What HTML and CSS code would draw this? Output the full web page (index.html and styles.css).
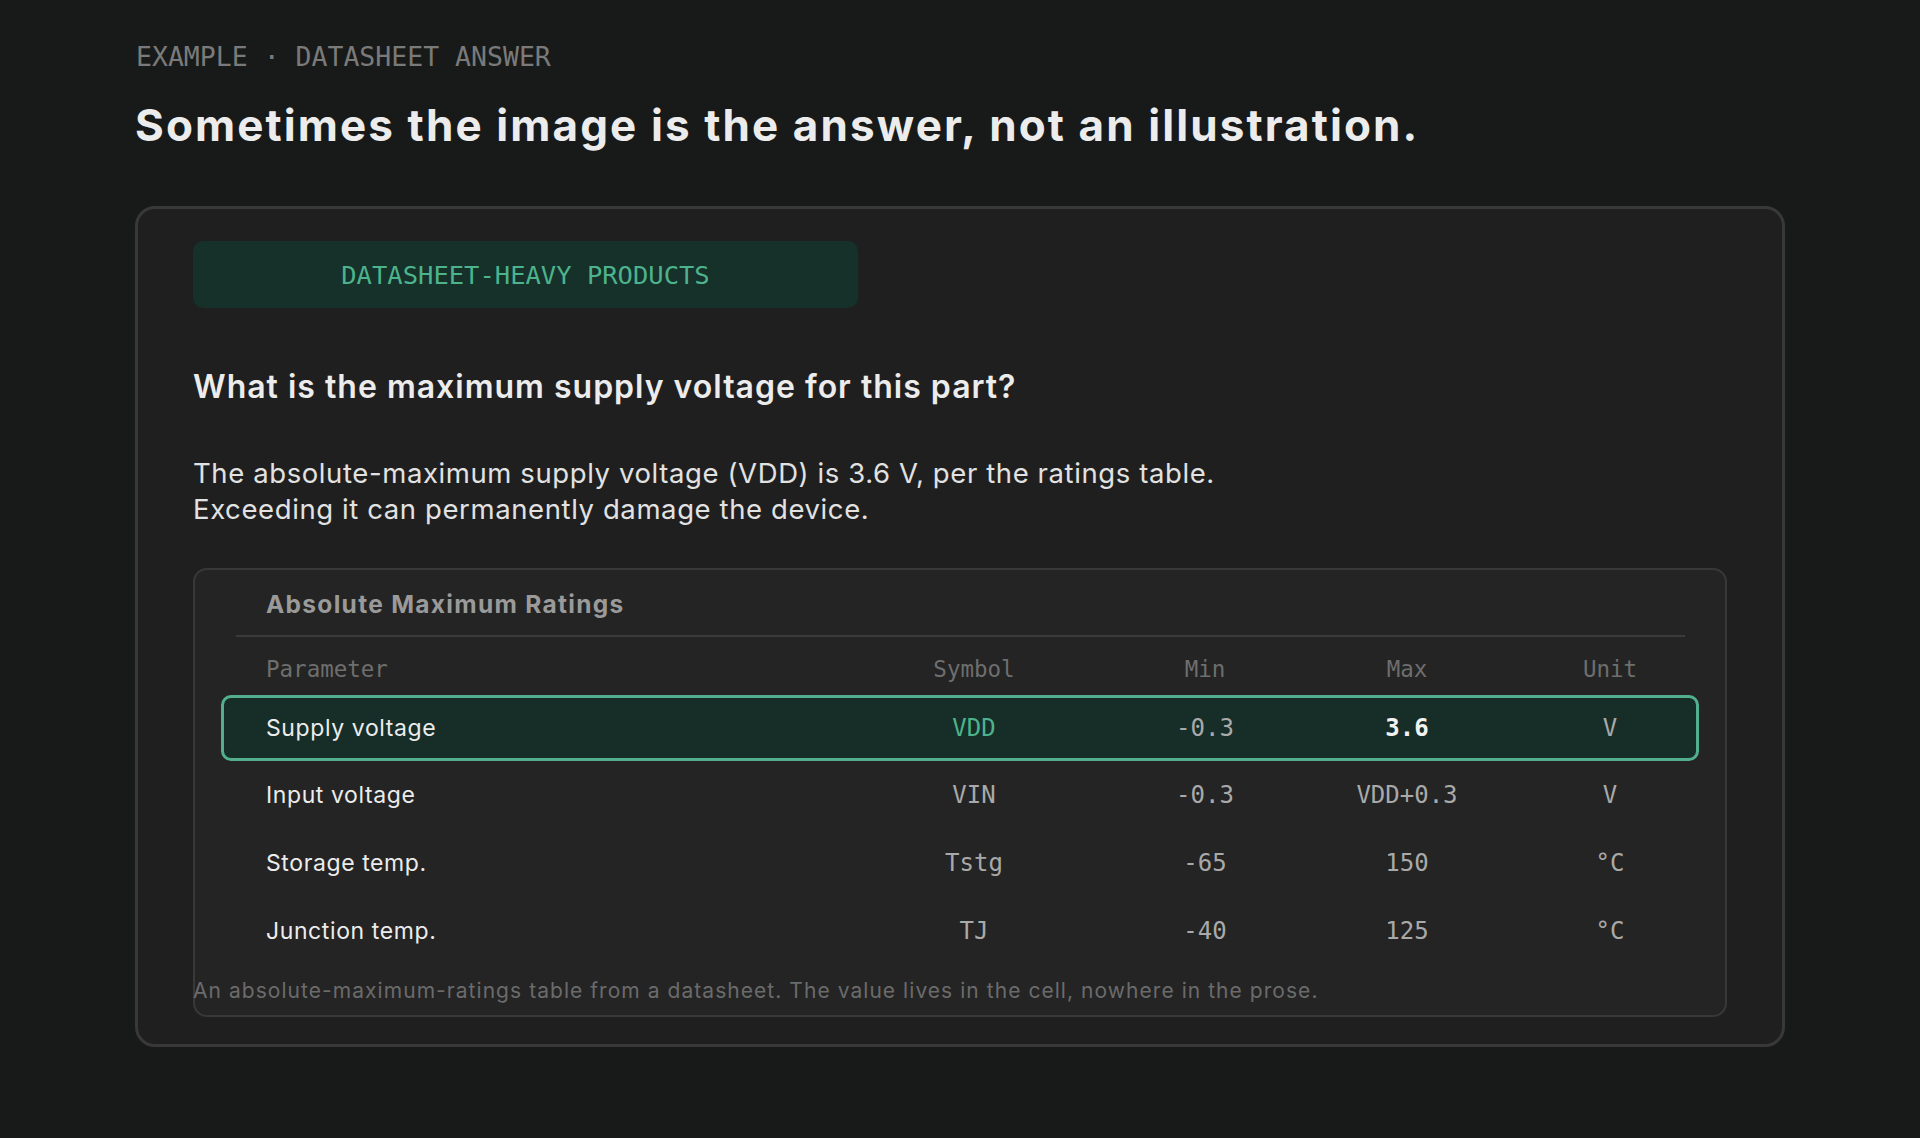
FILE: index.html
```html
<!DOCTYPE html>
<html lang="en">
<head>
<meta charset="utf-8">
<title>Datasheet answer</title>
<link rel="stylesheet" href="styles.css">
</head>
<body>
<main class="page">
  <div class="eyebrow">EXAMPLE · DATASHEET ANSWER</div>
  <h1 class="headline">Sometimes the image is the answer, not an illustration.</h1>
  <section class="card">
    <div class="tag">DATASHEET-HEAVY PRODUCTS</div>
    <h2 class="question">What is the maximum supply voltage for this part?</h2>
    <p class="answer">The absolute-maximum supply voltage (VDD) is 3.6 V, per the ratings table.<br>Exceeding it can permanently damage the device.</p>
    <figure class="figure">
      <div class="sheet">
        <div class="sheet-title">Absolute Maximum Ratings</div>
        <div class="rule"></div>
        <div class="row head">
          <span class="c-param">Parameter</span>
          <span class="c">Symbol</span>
          <span class="c">Min</span>
          <span class="c">Max</span>
          <span class="c">Unit</span>
        </div>
        <div class="row hl">
          <span class="c-param">Supply voltage</span>
          <span class="c sym-hl">VDD</span>
          <span class="c">-0.3</span>
          <span class="c max-hl">3.6</span>
          <span class="c">V</span>
        </div>
        <div class="row">
          <span class="c-param">Input voltage</span>
          <span class="c">VIN</span>
          <span class="c">-0.3</span>
          <span class="c">VDD+0.3</span>
          <span class="c">V</span>
        </div>
        <div class="row">
          <span class="c-param">Storage temp.</span>
          <span class="c">Tstg</span>
          <span class="c">-65</span>
          <span class="c">150</span>
          <span class="c">°C</span>
        </div>
        <div class="row">
          <span class="c-param">Junction temp.</span>
          <span class="c">TJ</span>
          <span class="c">-40</span>
          <span class="c">125</span>
          <span class="c">°C</span>
        </div>
      </div>
      <figcaption class="caption">An absolute-maximum-ratings table from a datasheet. The value lives in the cell, nowhere in the prose.</figcaption>
    </figure>
  </section>
</main>
</body>
</html>
```

FILE: styles.css
```css
* { box-sizing: border-box; }
html, body { margin: 0; padding: 0; }
body {
  background: #181a19;
  color: #e8e8e8;
  font-family: "Inter", "Liberation Sans", sans-serif;
}
.page {
  width: 1650px;
  margin: 0 auto;
  padding-top: 40px;
}
.eyebrow {
  font-family: "DejaVu Sans Mono", "Liberation Mono", monospace;
  font-size: 26.5px;
  line-height: 34px;
  color: #7a7a7a;
  padding-left: 1px;
}
.headline {
  margin: 26px 0 56px;
  font-size: 44px;
  line-height: 50px;
  font-weight: 700;
  color: #ececec;
  letter-spacing: 2.1px;
}
.card {
  border: 3px solid #383838;
  border-radius: 20px;
  background: #1f1f1f;
  padding: 32px 55px 27px;
}
.tag {
  width: 665px;
  height: 67px;
  border-radius: 10px;
  background: #16302a;
  color: #4db38c;
  font-family: "DejaVu Sans Mono", "Liberation Mono", monospace;
  font-size: 25.5px;
  display: flex;
  align-items: center;
  justify-content: center;
}
.question {
  margin: 59px 0 0;
  font-size: 32px;
  line-height: 40px;
  font-weight: 600;
  color: #ececec;
  letter-spacing: 1px;
}
.answer {
  margin: 48px 0 0;
  font-size: 27.5px;
  line-height: 36px;
  color: #e2e2e2;
  letter-spacing: 0.6px;
}
.figure {
  margin: 41px 0 0;
  background: #242424;
  border-radius: 14px;
  box-shadow: inset 0 0 0 2px #383838;
  padding: 21px 0 12px;
}
.sheet {
  margin: 0 28px;
}
.sheet-title {
  padding-left: 45px;
  font-size: 24.5px;
  line-height: 30px;
  font-weight: 700;
  color: #9a9a9a;
  letter-spacing: 1.3px;
}
.rule {
  height: 2px;
  background: #3a3a3a;
  margin: 16px 14px 0 15px;
}
.row {
  display: grid;
  grid-template-columns: 520px 376px 86px 318px 88px;
  align-items: center;
  height: 68px;
  padding-left: 42px;
  border: 3px solid transparent;
  border-radius: 10px;
  font-family: "DejaVu Sans Mono", "Liberation Mono", monospace;
  font-size: 24px;
  color: #a9a9a9;
}
.row .c { text-align: center; white-space: nowrap; }
.row .c-param {
  font-family: "Inter", "Liberation Sans", sans-serif;
  font-size: 23px;
  color: #ececec;
  letter-spacing: 0.6px;
}
.row.head {
  height: auto;
  padding-top: 14px;
  padding-bottom: 8px;
  line-height: 30px;
  font-size: 22.5px;
  color: #6e6e6e;
}
.row.head .c-param {
  font-family: "DejaVu Sans Mono", "Liberation Mono", monospace;
  font-size: 22.5px;
  color: #6e6e6e;
  letter-spacing: 0;
}
.row.hl {
  height: 66px;
  background: #172e28;
  border-color: #52b08e;
}
.sym-hl { color: #4db38c; }
.max-hl { color: #f2f2f2; font-weight: 700; }
.caption {
  margin-top: 12px;
  font-size: 21px;
  line-height: 28px;
  color: #6b6b6b;
  letter-spacing: 1.05px;
}
```
